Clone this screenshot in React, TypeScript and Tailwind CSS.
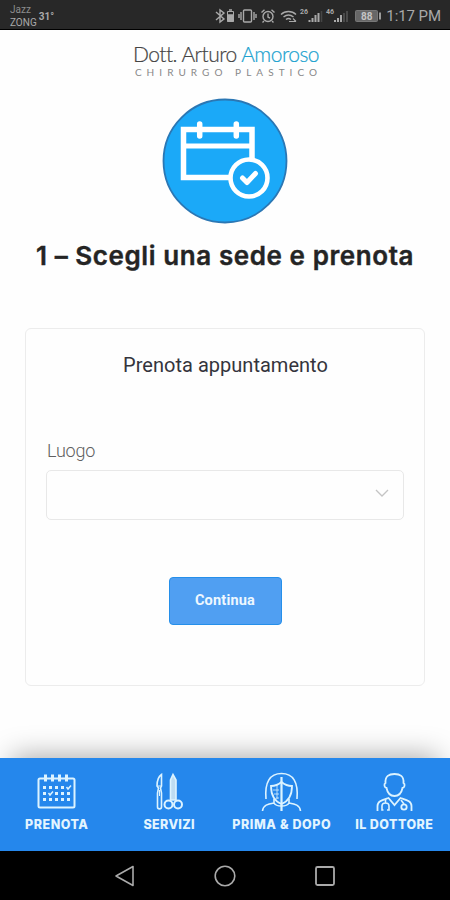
import { useState, type ReactNode } from "react";

// ============================================================
// StatusBar
// Carrier names and temperature left, system icons right.
// ============================================================
function StatusBar() {
  return (
    <div className="flex h-[30px] shrink-0 items-center justify-between border-b border-black bg-[#282828] pr-[9px] pl-[10px] font-['Roboto',sans-serif] text-[#a9a9a9]">
      <div className="flex items-center gap-[2px]">
        <div className="pt-0.5 text-[10px] leading-[13px]">
          <p className="text-[#8d8d8d]">Jazz</p>
          <p>ZONG</p>
        </div>
        <span className="pt-[3px] text-[10px] font-bold">31°</span>
      </div>
      <div className="flex items-center pt-0.5">
        <StatusIcons />
        <span className="ml-[4px] text-[15px] leading-5 tracking-[-0.08px]">1:17 PM</span>
      </div>
    </div>
  );
}

function StatusIcons() {
  return (
    <svg width="167" height="20" viewBox="0 0 167 20" fill="none" stroke="#a9a9a9" strokeWidth="1.4">
      {/* bluetooth */}
      <path d="M1 6l8 7-4 3V4l4 3-8 7" />
      {/* small battery */}
      <path d="M12.5 5.5h6v10h-6z" strokeWidth="1" />
      <path d="M13 9h5v6h-5zM14 4h3" fill="#a9a9a9" />
      {/* vibrate */}
      <rect x="28.5" y="4" width="8" height="12" rx="1" />
      <path d="M26 6v8M39 6v8M24 8v4M41 8v4" />
      {/* alarm */}
      <circle cx="53" cy="10.5" r="5" />
      <path d="M53 7.5V11l2 1.2M46.5 6.5l3-2.8M59.5 6.5l-3-2.8M49 15l-1.5 1.5M57 15l1.5 1.5" />
      {/* wifi */}
      <path d="M66 8.5c4-4 11-4 15 0M68.5 11c3-2.5 7-2.5 10 0M71 13.5c1.5-1.3 3.5-1.3 5 0" />
      <path d="M74 15.5h7M78 12.5l3 3" strokeWidth="1.2" />
      {/* first sim */}
      <text x="85" y="8" fontSize="7" fontWeight="bold" fill="#a9a9a9" stroke="none">26</text>
      <path d="M94.5 16v-2M97.5 16v-4M100.5 16v-7M103.5 16v-9" strokeWidth="2" />
      <path d="M106.5 16V5" strokeWidth="1.5" stroke="#454545" />
      {/* second sim */}
      <text x="111" y="8" fontSize="7" fontWeight="bold" fill="#a9a9a9" stroke="none">46</text>
      <path d="M120 16v-2M123 16v-4M126 16v-7" strokeWidth="2" />
      <path d="M129 16V7M132 16V5" strokeWidth="1.5" stroke="#555" />
      {/* battery */}
      <rect x="140.5" y="4.5" width="22" height="11" rx="1" fill="#676767" stroke="#777" strokeWidth="1" />
      <path d="M165 6.5v7" strokeWidth="1.8" />
      <text x="146" y="13.5" fontSize="10" fontWeight="bold" fill="#c4c4c4" stroke="none">88</text>
    </svg>
  );
}

// ============================================================
// Logo
// ============================================================
function Logo() {
  return (
    <div className="flex flex-col items-center pt-[12px] pl-[2px] font-['Lato',sans-serif]">
      <p className="text-[21px] leading-6 font-light tracking-[-0.53px] whitespace-nowrap text-[#444] [-webkit-text-stroke:0.2px]">
        Dott. Arturo <span className="text-[#20a2cf]">Amoroso</span>
      </p>
      <p className="pl-[5px] text-[10px] leading-3 tracking-[5.05px] whitespace-nowrap text-[#888]">
        CHIRURGO PLASTICO
      </p>
    </div>
  );
}

function CalendarBadge() {
  return (
    <svg className="mx-auto mt-[20px]" width="126" height="126" viewBox="0 0 126 126" fill="none" stroke="#fff">
      <circle cx="63" cy="63" r="61.5" fill="#1ba9f8" stroke="#2b77b4" strokeWidth="1.8" />
      <path d="M70 79.5H21.5V31.5H90v32" strokeWidth="5.5" />
      <path d="M22 48h68" strokeWidth="5" />
      <path d="M37.700 26v12M74.300 26v12" strokeWidth="5.5" strokeLinecap="round" />
      <circle cx="87" cy="80" r="18.5" fill="#1ba9f8" strokeWidth="4.6" />
      <path d="M80.500 80l4.500 4.500 8.500-9" strokeWidth="5" strokeLinecap="round" strokeLinejoin="round" />
    </svg>
  );
}

// ============================================================
// BookingCard
// Location picker and the button that moves to the next step.
// ============================================================
function BookingCard() {
  return (
    <section className="mx-[25px] mt-[54px] flex h-[358px] flex-col rounded-md border-[1.5px] border-[#ececec] px-5 font-['Roboto',sans-serif]">
      <h2 className="mt-[22px] pl-px text-center text-[20px] leading-7 tracking-[0.02px] text-[#34343c]">
        Prenota appuntamento
      </h2>
      <p className="mt-[60px] pl-px text-[18px] leading-6 font-light tracking-[-0.2px] text-[#606060]">Luogo</p>
      <button className="mt-[7px] flex h-[50px] w-full items-center justify-end rounded-[5px] border-[1.5px] border-[#e8e8e8] pr-[14px] pb-1">
        <svg width="14" height="9" viewBox="0 0 14 9" fill="none" stroke="#c4c4c4" strokeWidth="1.3">
          <path d="M1 1l6 6 6-6" />
        </svg>
      </button>
      <button className="mx-auto mt-[57px] h-12 w-[113px] rounded-[4px] border-[1.5px] border-[#258fea] bg-[#509ff2] text-[14.5px] font-bold tracking-[0.2px] text-[#edf7ff]">
        Continua
      </button>
    </section>
  );
}

// ============================================================
// Bottom tab icons
// ============================================================
const prenotaIcon = (
  <>
    <rect x="2.5" y="6.5" width="36" height="29" rx="1.5" strokeWidth="2" />
    <path d="M9.5 2.5v7M16.5 2.5v7M23.5 2.5v7M30.5 2.5v7" strokeWidth="3" />
    <path
      d="M7 15.500h3M13 15.500h3M19 15.500h3M25 15.500h3M7 21.500h3M19 21.500h3M25 21.500h3M31 21.500h3M7 27.500h3M13 27.500h3M19 27.500h3M25 27.500h3M31 27.500h3"
      strokeWidth="3.2"
    />
    <path d="M30.5 15l1.5 2 3-3.5M12.5 21l1.5 2 3-3.5" strokeWidth="1.5" />
  </>
);

const serviziIcon = (
  <>
    <path d="M12.5 2.5c-3 2-4.500 6-4.500 11.500l1.5 2-1 5v14c0 2.500 4 2.500 4 0V21l-1-5 1-2z" />
    <path d="M8.5 14h4M10.5 18v6" strokeWidth="1" />
    <path d="M21.5 28V8L24 2.500 27 8v20z" fill="#bddcf2" />
    <circle cx="19.5" cy="32.500" r="4" strokeWidth="2" />
    <circle cx="29" cy="32.500" r="4" strokeWidth="2" />
  </>
);

const primaDopoIcon = (
  <>
    <path d="M5 27C3.500 10 9 1.500 20.500 1.500S37.500 10 36 27" />
    <path d="M10 14c4 0 7-1 10.500-4 3.500 3 6.500 4 10.500 4 0 9-3 15-10.500 18C13 29 10 23 10 14z" strokeWidth="1.8" />
    <path d="M20.500 5v34" strokeWidth="2.2" />
    <path d="M12 18h6M13 22h5M15 26h3M16 13v14" strokeWidth=".8" />
    <path d="M13 27v4C7 32 2 33 1.500 39M28 27v4c6 1 11 2 11.500 8M13 31c2 4 13 4 15 0" />
  </>
);

const dottoreIcon = (
  <>
    <path d="M11.500 11C11 4 15 2 20.500 2S30 4 29.500 11c2 1 1 5-1 5-1 5-4 8-8 8s-7-3-8-8c-2 0-3-4-1-5z" strokeWidth="1.8" />
    <path d="M3.500 39v-5c0-5 5-6 11-8l6 7 6-7c6 2 11 3 11 8v5" strokeWidth="1.8" />
    <path d="M11.500 27v4M9.500 38H8v-4c0-4 7-4 7 0v4h-2M27 28l3 4" />
    <circle cx="30" cy="35" r="2.7" strokeWidth="1.8" />
  </>
);

const tabs = [
  { label: "PRENOTA", icon: prenotaIcon, textClass: "tracking-[0.5px]" },
  { label: "SERVIZI", icon: serviziIcon, textClass: "tracking-[0.35px]" },
  { label: "PRIMA & DOPO", icon: primaDopoIcon, textClass: "tracking-[0.6px]" },
  { label: "IL DOTTORE", icon: dottoreIcon, textClass: "tracking-[0.45px]" },
];

function Tab({
  label,
  textClass,
  onSelect,
  children,
}: {
  label: string;
  textClass: string;
  onSelect: () => void;
  children: ReactNode;
}) {
  return (
    <button onClick={onSelect} className="flex min-w-0 flex-col items-center pt-[14px] pl-px">
      <svg width="41" height="41" viewBox="0 0 41 41" fill="none" stroke="#dcf3ff" strokeWidth="1.6">
        {children}
      </svg>
      <span className={`mt-[4px] text-[12.5px] leading-4 font-extrabold whitespace-nowrap text-[#e3f5ff] ${textClass}`}>
        {label}
      </span>
    </button>
  );
}

export default function App() {
  const [, setActiveTab] = useState("PRENOTA");

  return (
    <div className="flex h-[900px] w-[450px] flex-col overflow-hidden bg-[#fefefe]">
      <StatusBar />
      <main className="flex min-h-0 flex-1 flex-col">
        <Logo />
        <CalendarBadge />
        <h1 className="mt-[14px] text-center font-['Inter',sans-serif] text-[26px] leading-9 font-semibold tracking-[0.58px] whitespace-nowrap text-[#242424] [-webkit-text-stroke:0.4px]">
          1 – Scegli una sede e prenota
        </h1>
        <BookingCard />
      </main>
      <nav className="grid h-[93px] shrink-0 grid-cols-4 bg-[#2587ec] font-['Inter',sans-serif] shadow-[0_-14px_28px_-12px_rgba(0,0,0,0.34)]">
        {tabs.map((tab) => (
          <Tab key={tab.label} label={tab.label} textClass={tab.textClass} onSelect={() => setActiveTab(tab.label)}>
            {tab.icon}
          </Tab>
        ))}
      </nav>
      {/* Android navigation keys */}
      <div className="flex h-[49px] shrink-0 items-center justify-center gap-[78px] bg-black">
        <svg width="22" height="22" viewBox="0 0 22 22" fill="none" stroke="#aaa" strokeWidth="1.6">
          <path d="M19 1.5v19L2 11z" strokeLinejoin="round" />
        </svg>
        <svg width="22" height="22" viewBox="0 0 22 22" fill="none" stroke="#aaa" strokeWidth="1.6">
          <circle cx="11" cy="11" r="9.8" />
        </svg>
        <svg width="22" height="22" viewBox="0 0 22 22" fill="none" stroke="#aaa" strokeWidth="1.8">
          <rect x="2" y="2" width="18" height="18" rx="1.5" />
        </svg>
      </div>
    </div>
  );
}
